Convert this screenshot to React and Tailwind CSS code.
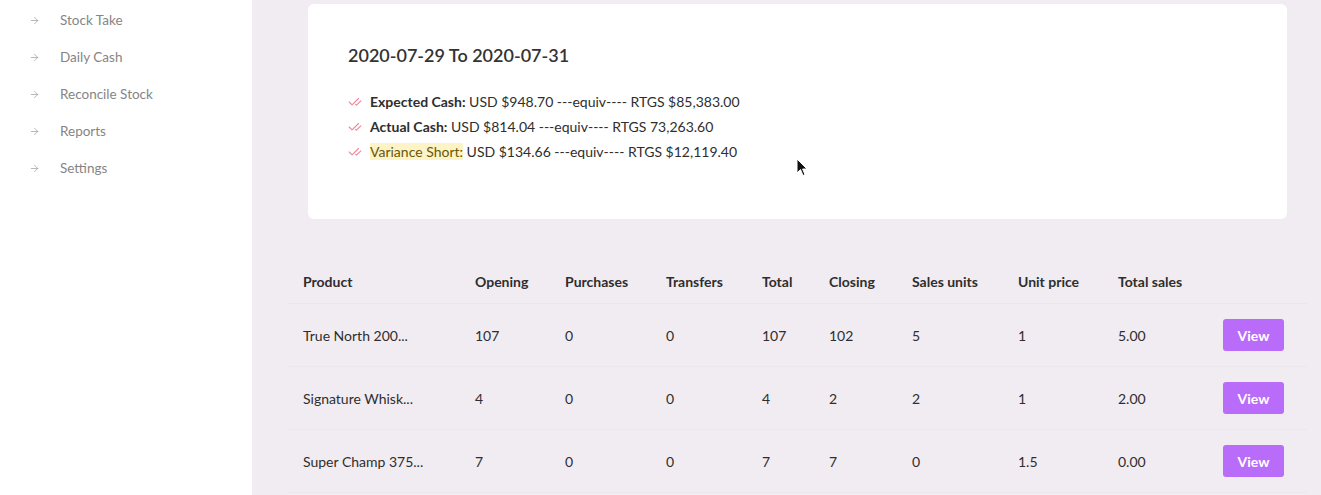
import { ArrowRight, CheckCheck } from "lucide-react";

const navItems = ["Stock Take", "Daily Cash", "Reconcile Stock", "Reports", "Settings"];

const rows = [
  { product: "True North 200...", opening: 107, purchases: 0, transfers: 0, total: 107, closing: 102, units: 5, price: "1", sales: "5.00" },
  { product: "Signature Whisk...", opening: 4, purchases: 0, transfers: 0, total: 4, closing: 2, units: 2, price: "1", sales: "2.00" },
  { product: "Super Champ 375...", opening: 7, purchases: 0, transfers: 0, total: 7, closing: 7, units: 0, price: "1.5", sales: "0.00" },
];

const headers = ["Product", "Opening", "Purchases", "Transfers", "Total", "Closing", "Sales units", "Unit price", "Total sales", ""];

const cols = "grid grid-cols-[172px_90px_101px_96px_67px_83px_106px_100px_105px_99px]";

export default function App() {
  return (
    <div
      className="flex h-[495px] w-[1321px] overflow-hidden text-[#2e2e2e]"
      style={{ fontFamily: "Lato, 'Open Sans', sans-serif" }}
    >
      {/* Sidebar */}
      <aside className="w-[252px] shrink-0 bg-white pt-[2px]">
        <ul className="flex flex-col">
          {navItems.map((item) => (
            <li key={item} className="flex h-[37px] items-center pl-[29px] text-[13.5px] text-[#858585]">
              <ArrowRight size={11} strokeWidth={1.5} className="text-[#999]" />
              <span className="ml-[20px]">{item}</span>
            </li>
          ))}
        </ul>
      </aside>

      {/* Main */}
      <main className="relative flex-1 bg-[#f1ecf2] pt-[4px]">
        <div className="ml-[56px] h-[215px] w-[979px] rounded-md bg-white px-10 pt-[38px]">
          <h2 className="text-[18px] font-semibold text-[#333]">2020-07-29 To 2020-07-31</h2>
          <ul className="mt-[20px] flex flex-col text-[14px]">
            <li className="flex h-[25px] items-center">
              <CheckCheck size={14} strokeWidth={2} className="text-[#f2889a]" />
              <span className="ml-[8px]">
                <b className="font-bold">Expected Cash:</b> USD $948.70 ---equiv---- RTGS $85,383.00
              </span>
            </li>
            <li className="flex h-[25px] items-center">
              <CheckCheck size={14} strokeWidth={2} className="text-[#f2889a]" />
              <span className="ml-[8px]">
                <b className="font-bold">Actual Cash:</b> USD $814.04 ---equiv---- RTGS 73,263.60
              </span>
            </li>
            <li className="flex h-[25px] items-center">
              <CheckCheck size={14} strokeWidth={2} className="text-[#f2889a]" />
              <span className="ml-[8px]">
                <span className="bg-[#fcf3c6] text-[#6b5806]">Variance Short:</span> USD $134.66 ---equiv---- RTGS $12,119.40
              </span>
            </li>
          </ul>
        </div>

        {/* Table */}
        <div className="ml-[36px] mt-[41px] w-[1019px] text-[14px]">
          <div className={`${cols} h-[44px] items-center border-b border-[#ebe6ee] font-bold`}>
            {headers.map((h, i) => (
              <div key={i} className="pl-[15px]">{h}</div>
            ))}
          </div>
          {rows.map((r) => (
            <div key={r.product} className={`${cols} h-[63px] items-center border-b border-[#ebe6ee]`}>
              <div className="pl-[15px]">{r.product}</div>
              <div className="pl-[15px]">{r.opening}</div>
              <div className="pl-[15px]">{r.purchases}</div>
              <div className="pl-[15px]">{r.transfers}</div>
              <div className="pl-[15px]">{r.total}</div>
              <div className="pl-[15px]">{r.closing}</div>
              <div className="pl-[15px]">{r.units}</div>
              <div className="pl-[15px]">{r.price}</div>
              <div className="pl-[15px]">{r.sales}</div>
              <div className="pl-[15px]">
                <button className="h-[32px] w-[61px] rounded-[3px] bg-[#b86cf9] text-[14px] font-bold text-white">
                  View
                </button>
              </div>
            </div>
          ))}
        </div>

        {/* Mouse pointer */}
        <svg className="absolute left-[544px] top-[158px]" width="12" height="19" viewBox="0 0 12 19">
          <path d="M1 1 L1 15 L4.5 11.5 L7 17.5 L9 16.6 L6.6 11 L11 11 Z" fill="#111" stroke="#fff" strokeWidth="1" />
        </svg>
      </main>
    </div>
  );
}
